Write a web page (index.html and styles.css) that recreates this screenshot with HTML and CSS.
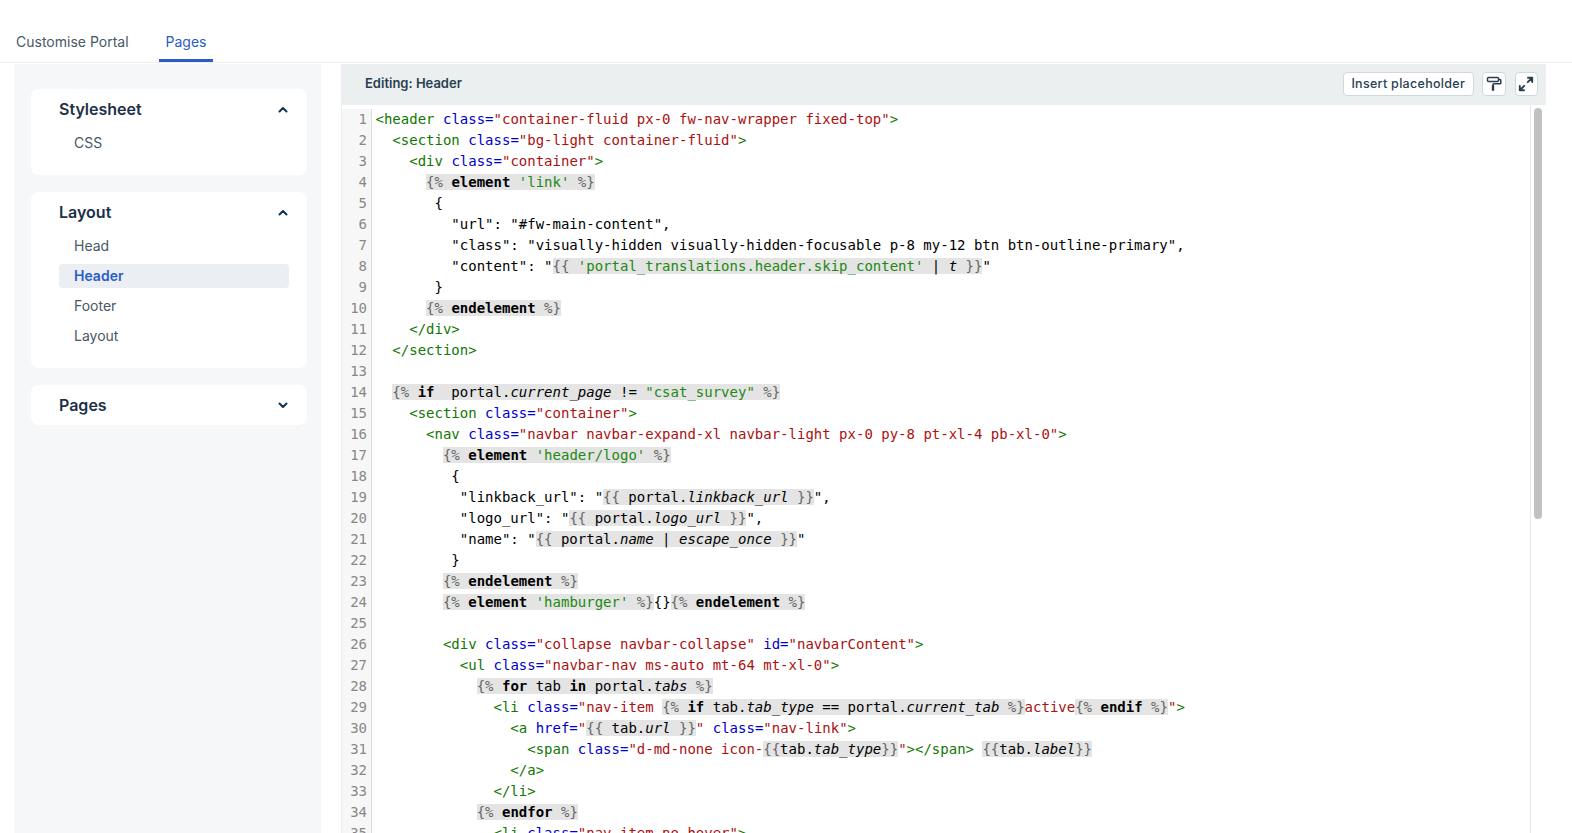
FILE: index.html
```html
<!DOCTYPE html>
<html lang="en">
<head>
<meta charset="utf-8">
<title>Pages</title>
<link rel="stylesheet" href="styles.css">
</head>
<body>
<nav class="tabs">
  <a class="tab">Customise Portal</a>
  <a class="tab active">Pages</a>
</nav>
<main class="layout">
  <aside class="sidebar">
    <section class="card">
      <div class="card-head"><span>Stylesheet</span><svg class="chev" viewBox="0 0 10 7"><path d="M1.500 5.500L5 2l3.500 3.500"/></svg></div>
      <ul class="items"><li class="item">CSS</li></ul>
    </section>
    <section class="card">
      <div class="card-head"><span>Layout</span><svg class="chev" viewBox="0 0 10 7"><path d="M1.500 5.500L5 2l3.500 3.500"/></svg></div>
      <ul class="items">
        <li class="item">Head</li>
        <li class="item current">Header</li>
        <li class="item">Footer</li>
        <li class="item">Layout</li>
      </ul>
    </section>
    <section class="card">
      <div class="card-head"><span>Pages</span><svg class="chev" viewBox="0 0 10 7"><path d="M1.500 1.500L5 5l3.500-3.500"/></svg></div>
    </section>
  </aside>
  <section class="editor">
    <header class="editor-head">
      <span class="editing">Editing: Header</span>
      <div class="actions">
        <button class="btn">Insert placeholder</button>
        <button class="btn icon"><svg viewBox="0 0 16 16"><path d="M2.500 1.500h9a1 1 0 0 1 1 1v2a1 1 0 0 1-1 1h-9a1 1 0 0 1-1-1v-2a1 1 0 0 1 1-1zM12.500 3.500h1.500a.8.800 0 0 1 .8.800v2.700a.8.800 0 0 1-.8.800H7.800a.8.800 0 0 0-.8.800v.900"/><path class="solid" d="M7 10v3.800"/></svg></button>
        <button class="btn icon"><svg class="bold" viewBox="0 0 16 16"><path d="M10 1.800h4.200V6M14 2L9.800 6.200M6 14.200H1.800V10M2 14l4.200-4.200"/></svg></button>
      </div>
    </header>
    <div class="code-wrap">
      <div class="code-scroll">
        <ol class="code">
<li><span class="t">&lt;header</span> <span class="a">class=</span><span class="s">"container-fluid px-0 fw-nav-wrapper fixed-top"</span><span class="t">&gt;</span></li>
<li>  <span class="t">&lt;section</span> <span class="a">class=</span><span class="s">"bg-light container-fluid"</span><span class="t">&gt;</span></li>
<li>    <span class="t">&lt;div</span> <span class="a">class=</span><span class="s">"container"</span><span class="t">&gt;</span></li>
<li>      <span class="l"><span class="d">{%</span> <b>element</b> <span class="g">'link'</span> <span class="d">%}</span></span></li>
<li>       {</li>
<li>         "url": "#fw-main-content",</li>
<li>         "class": "visually-hidden visually-hidden-focusable p-8 my-12 btn btn-outline-primary",</li>
<li>         "content": "<span class="l"><span class="d">{{</span> <span class="g">'portal_translations.header.skip_content'</span> | <i>t</i> <span class="d">}}</span></span>"</li>
<li>       }</li>
<li>      <span class="l"><span class="d">{%</span> <b>endelement</b> <span class="d">%}</span></span></li>
<li>    <span class="t">&lt;/div&gt;</span></li>
<li>  <span class="t">&lt;/section&gt;</span></li>
<li> </li>
<li>  <span class="l"><span class="d">{%</span> <b>if</b>  portal.<i>current_page</i> != <span class="g">"csat_survey"</span> <span class="d">%}</span></span></li>
<li>    <span class="t">&lt;section</span> <span class="a">class=</span><span class="s">"container"</span><span class="t">&gt;</span></li>
<li>      <span class="t">&lt;nav</span> <span class="a">class=</span><span class="s">"navbar navbar-expand-xl navbar-light px-0 py-8 pt-xl-4 pb-xl-0"</span><span class="t">&gt;</span></li>
<li>        <span class="l"><span class="d">{%</span> <b>element</b> <span class="g">'header/logo'</span> <span class="d">%}</span></span></li>
<li>         {</li>
<li>          "linkback_url": "<span class="l"><span class="d">{{</span> portal.<i>linkback_url</i> <span class="d">}}</span></span>",</li>
<li>          "logo_url": "<span class="l"><span class="d">{{</span> portal.<i>logo_url</i> <span class="d">}}</span></span>",</li>
<li>          "name": "<span class="l"><span class="d">{{</span> portal.<i>name</i> | <i>escape_once</i> <span class="d">}}</span></span>"</li>
<li>         }</li>
<li>        <span class="l"><span class="d">{%</span> <b>endelement</b> <span class="d">%}</span></span></li>
<li>        <span class="l"><span class="d">{%</span> <b>element</b> <span class="g">'hamburger'</span> <span class="d">%}</span></span>{}<span class="l"><span class="d">{%</span> <b>endelement</b> <span class="d">%}</span></span></li>
<li> </li>
<li>        <span class="t">&lt;div</span> <span class="a">class=</span><span class="s">"collapse navbar-collapse"</span> <span class="a">id=</span><span class="s">"navbarContent"</span><span class="t">&gt;</span></li>
<li>          <span class="t">&lt;ul</span> <span class="a">class=</span><span class="s">"navbar-nav ms-auto mt-64 mt-xl-0"</span><span class="t">&gt;</span></li>
<li>            <span class="l"><span class="d">{%</span> <b>for</b> tab <b>in</b> portal.<i>tabs</i> <span class="d">%}</span></span></li>
<li>              <span class="t">&lt;li</span> <span class="a">class=</span><span class="s">"nav-item </span><span class="l"><span class="d">{%</span> <b>if</b> tab.<i>tab_type</i> == portal.<i>current_tab</i> <span class="d">%}</span></span><span class="s">active</span><span class="l"><span class="d">{%</span> <b>endif</b> <span class="d">%}</span></span><span class="s">"</span><span class="t">&gt;</span></li>
<li>                <span class="t">&lt;a</span> <span class="a">href=</span><span class="s">"</span><span class="l"><span class="d">{{</span> tab.<i>url</i> <span class="d">}}</span></span><span class="s">"</span> <span class="a">class=</span><span class="s">"nav-link"</span><span class="t">&gt;</span></li>
<li>                  <span class="t">&lt;span</span> <span class="a">class=</span><span class="s">"d-md-none icon-</span><span class="l"><span class="d">{{</span>tab.<i>tab_type</i><span class="d">}}</span></span><span class="s">"</span><span class="t">&gt;&lt;/span&gt;</span> <span class="l"><span class="d">{{</span>tab.<i>label</i><span class="d">}}</span></span></li>
<li>                <span class="t">&lt;/a&gt;</span></li>
<li>              <span class="t">&lt;/li&gt;</span></li>
<li>            <span class="l"><span class="d">{%</span> <b>endfor</b> <span class="d">%}</span></span></li>
<li>              <span class="t">&lt;li</span> <span class="a">class=</span><span class="s">"nav-item no-hover"</span><span class="t">&gt;</span></li>
        </ol>
      </div>
      <div class="scrollbar"><div class="thumb"></div></div>
    </div>
  </section>
</main>
</body>
</html>
```
FILE: styles.css
```css
* { box-sizing: border-box; }
html, body { margin: 0; height: 100%; overflow: hidden; }
body { display: flex; flex-direction: column; background: #fff; font-family: Inter, "Liberation Sans", sans-serif; color: #12344d; }
.tabs { flex: none; height: 63px; margin-bottom: 1px; display: flex; align-items: flex-end; gap: 8px; padding-left: 16px; border-bottom: 1px solid #ebeff3; }
.tab { height: 62px; display: flex; align-items: flex-end; padding-bottom: 10px; font-size: 14px; line-height: 20px; color: #475867; }
.tab:first-child { padding-right: 22px; }
.tab.active { color: #2c5cc5; padding: 0 7px 7px; border-bottom: 3px solid #2c5cc5; }
.layout { flex: 1; min-height: 0; display: flex; }
.sidebar { flex: none; width: 307px; margin-left: 14px; padding: 25px 14px 0 17px; background: #f5f7f9; display: flex; flex-direction: column; gap: 17px; }
.card { background: #fff; border-radius: 8px; padding: 0 18px 0 28px; }
.card-head { height: 40px; display: flex; align-items: center; justify-content: space-between; font-size: 16px; font-weight: 600; color: #1c3147; padding-right: 1px; }
.chev { width: 10px; height: 7px; fill: none; stroke: #12344d; stroke-width: 2; stroke-linecap: round; stroke-linejoin: round; }
.items { list-style: none; margin: 0; padding: 2px 0 17px; }
.item { height: 24px; margin-bottom: 6px; padding-left: 15px; border-radius: 4px; font-size: 14px; line-height: 24px; color: #475867; }
.item:last-child { margin-bottom: 3px; }
.item.current { background: #ebeff3; color: #2c5cc5; font-weight: 600; }
.editor { flex: none; width: 1205px; margin-left: 20px; display: flex; flex-direction: column; min-height: 0; }
.editor-head { flex: none; height: 41px; background: #ebefef; display: flex; align-items: center; justify-content: space-between; padding: 0 8px 0 24px; }
.editing { font-size: 13px; font-weight: 600; color: #283f52; margin-bottom: 4px; }
.actions { display: flex; gap: 9px; margin-top: -1px; }
.btn { height: 24px; padding: 0 0 1px; width: 130.500px; margin-right: -.500px; background: #fff; border: 1px solid #cfd7df; border-radius: 4px; font: 500 12.500px Inter, "Liberation Sans", sans-serif; color: #283f52; letter-spacing: .3px; white-space: nowrap; }
.btn.icon { width: 23.500px; margin-right: 0; padding: 3px; display: flex; align-items: center; justify-content: center; }
.btn svg { flex: none; width: 16px; height: 16px; fill: none; stroke: #283f52; stroke-width: 1.500; stroke-linecap: round; stroke-linejoin: round; }
.btn svg.bold { stroke-width: 1.900; }
.btn svg .solid { stroke-width: 2.400; }
.code-wrap { flex: 1; min-height: 0; display: flex; border-left: 1px solid #ebeff3; margin-right: 2px; }
.code-scroll { flex: 1; min-width: 0; overflow: hidden; padding-top: 4px; }
.code { margin: 0; padding: 0; list-style: none; counter-reset: ln; font: 14px/21px "DejaVu Sans Mono", monospace; color: #000; }
.code li { counter-increment: ln; display: block; position: relative; white-space: pre; height: 21px; padding-left: 33.500px; }
.code li::before { content: counter(ln); box-sizing: border-box; position: absolute; left: 0; top: 0; width: 30px; height: 21px; padding-right: 4px; text-align: right; color: #888; background: #f7f7f7; border-right: 1px solid #dddddd; }
.t { color: #117700; }
.a { color: #0000cc; }
.s { color: #aa1111; }
.l { background: #e4e4e4; }
.d { color: #666; }
.g { color: #228811; }
.code b { font-weight: 700; color: #000; }
.code i { font-style: oblique; }
.scrollbar { flex: none; width: 14px; padding: 3px 2px 0 3px; border-left: 1px solid #e8e8e8; }
.thumb { width: 8px; height: 411px; border-radius: 4px; background: #c1c1c1; }
```
